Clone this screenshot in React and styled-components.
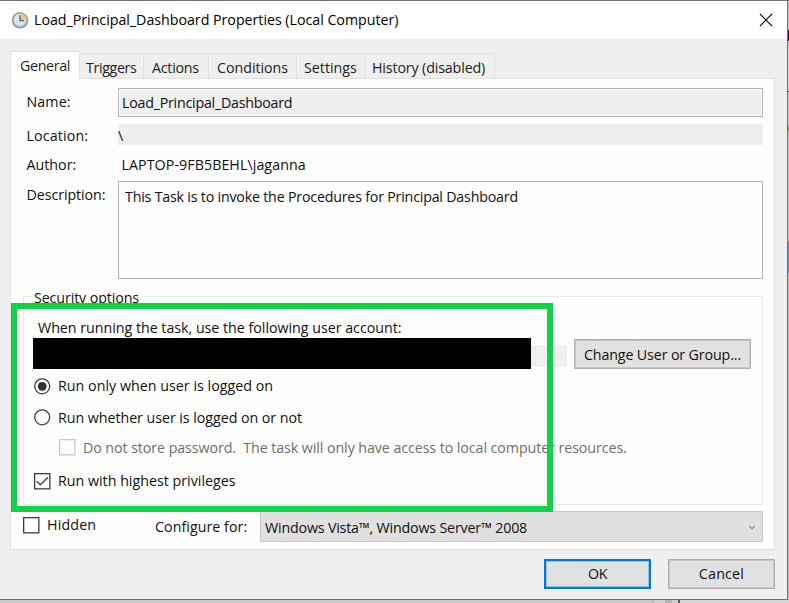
import React from "react";
import styled, { createGlobalStyle } from "styled-components";

const GlobalStyle = createGlobalStyle`
  *, *::before, *::after { box-sizing: border-box; }
  body {
    margin: 0;
    overflow: hidden;
    background: #cfcfcf;
    font-family: "Open Sans", "Noto Sans", sans-serif;
    font-size: 14.25px;
    line-height: 20px;
    color: #111;
  }
`;

const Desktop = styled.div`
  display: grid;
  grid-template: 600px 3px / 788px 1px;
  width: 789px;
  height: 603px;
`;

const SideEdge = styled.div`
  background: linear-gradient(
    #6a6767 1px, #cbcbcb 1px 30px, #3a1530 30px 41px, #d4d4d4 41px 91px,
    #222 91px 92px, #d0d0d0 92px 126px, #8c9474 126px 131px, #c6c6c6 131px 241px,
    #6f8fb8 241px 273px, #bdbdbd 273px
  );
`;

const BottomEdge = styled.div`
  grid-column: 1 / -1;
  background: linear-gradient(
    90deg, #c9c9c9 652px, #b8b8b8 652px 654px, #cfcfcf 654px 665px, #b4b4b4 665px 672px,
    #cfcfcf 672px 678px, #555 678px 680px, #d6d6d6 680px
  );
`;

const Dialog = styled.main`
  display: flex;
  flex-direction: column;
  border: solid #6f6f6f;
  border-width: 1px 1px 1px 0;
  background: #efefef;
`;

const TitleBar = styled.header`
  display: flex;
  align-items: center;
  height: 38px;
  padding: 0 14px 0 11px;
  background: #fff;
  color: #000;
`;

const Text = styled.span`
  white-space: pre;
  letter-spacing: ${(p) => p.$track || 0}px;
`;

const Title = styled(Text)`
  flex: 1;
  margin-left: 5px;
`;

const Tabs = styled.nav`
  display: flex;
  align-items: flex-end;
  height: 39px;
  padding-left: 10px;
`;

const Tab = styled.div`
  width: ${(p) => p.$width}px;
  height: 25px;
  padding: 4px 0 0 ${(p) => p.$inset}px;
  border: solid #e2e2e2;
  border-width: 1px 1px 0 0;
  color: #222;
`;

const ActiveTab = styled(Tab)`
  height: 28px;
  margin-bottom: -1px;
  border-left-width: 1px;
  background: #fff;
  position: relative;
  z-index: 1;
`;

const Panel = styled.section`
  display: flex;
  flex-direction: column;
  width: 765px;
  height: 472px;
  margin-left: 10px;
  padding: 9px 11px 0 12px;
  border: 1px solid #e1e1e1;
  background: #fefefe;
  position: relative;
`;

const Field = styled.div`
  display: grid;
  grid-template-columns: 95px 1fr;
  height: ${(p) => p.$height}px;
`;

const Caption = styled(Text)`
  padding: ${(p) => p.$drop}px 0 0 3.5px;
`;

const NameBox = styled.div`
  height: 29px;
  padding: 4px 0 0 3px;
  border: 1px solid #b5b5b5;
  background: #efefef;
  box-shadow: inset 0 0 0 1px #fbfbfb;
`;

const LocationBox = styled.div`
  height: 21px;
  margin-top: 1px;
  padding-top: 2px;
  background: #efefef;
`;

const AuthorValue = styled.div`
  padding: 3px 0 0 3.5px;
`;

const DescriptionBox = styled.div`
  height: 98px;
  padding: 5px 0 0 6px;
  border: 1px solid #b3b3b3;
`;

const Group = styled.section`
  height: 209px;
  margin-top: 17px;
  border: 1px solid #e8e8e8;
`;

const Legend = styled.div`
  width: 111px;
  height: 20px;
  margin: -9px 0 0 7px;
  padding-left: 3px;
  background: #fefefe;
`;

const AccountPrompt = styled.div`
  height: 20px;
  margin: 10px 0 0 14px;
`;

const AccountRow = styled.div`
  display: flex;
  align-items: center;
  height: 31px;
  margin-left: 9px;
`;

const Redaction = styled.div`
  width: 498px;
  height: 31px;
  background: #000;
`;

const AccountBox = styled.div`
  width: 36px;
  height: 22px;
  margin: 4px 7px 0 0;
  background: #f0f0f0;
`;

const Button = styled.button`
  width: ${(p) => p.$width}px;
  height: 30px;
  padding: ${(p) => p.$drop || 0}px 0 1px;
  border: ${(p) => (p.$primary ? "2px solid #0078d7" : "1px solid #b0b0b0")};
  border-radius: 0;
  background: #e1e1e1;
  box-shadow: ${(p) => (p.$primary ? "inset 0 0 0 1px #9cc0de" : "inset 0 0 0 1px #c8c8c8")};
  font: inherit;
  color: #111;
`;

const Option = styled.label`
  display: flex;
  align-items: center;
  gap: 7px;
  height: ${(p) => p.$height}px;
  margin-left: ${(p) => p.$indent}px;
  color: ${(p) => (p.$muted ? "#6d6d6d" : "inherit")};
`;

const BottomRow = styled.div`
  display: grid;
  grid-template-columns: 132px 105px 1fr;
  height: 31px;
  margin-top: 6px;
`;

const ConfigureLabel = styled(Text)`
  margin-top: 6px;
`;

const Combo = styled.div`
  display: flex;
  align-items: center;
  justify-content: space-between;
  height: 31px;
  padding: 2px 6px 0 4px;
  border: 1px solid #c9c9c9;
  background: #e0e0e0;
`;

const Actions = styled.footer`
  display: flex;
  justify-content: flex-end;
  gap: 17px;
  padding: 9px 12px 0 0;
`;

const Highlight = styled.div`
  position: absolute;
  left: 0;
  top: 224px;
  width: 542px;
  height: 209px;
  border: 6px solid #0fd244;
  pointer-events: none;
`;

const Icon = styled.svg`
  display: block;
  flex: none;
`;

const ClockIcon = () => (
  <Icon width="18" height="18" viewBox="0 0 18 18">
    <circle cx="9" cy="9.4" r="8.2" fill="#9b9a96" />
    <circle cx="9" cy="9" r="7.3" fill="#bfc4c4" stroke="#8e9290" strokeWidth=".8" />
    <circle cx="9" cy="9" r="5.9" fill="#d6e4ec" />
    <path d="M9 9V2.5A6.5 6.5 0 0 1 15.5 9Z" fill="#ecca80" />
    <path d="M9 4.3V9.6H13" fill="none" stroke="#4c6475" strokeWidth="1.3" />
  </Icon>
);

const CloseIcon = () => (
  <Icon width="14" height="14" viewBox="0 0 14 14">
    <path d="M1 1 13 13M13 1 1 13" stroke="#111" strokeWidth="1.1" />
  </Icon>
);

const Radio = ({ on }) => (
  <Icon width="17" height="17" viewBox="0 0 17 17">
    <circle cx="8.2" cy="8.3" r="7.5" fill="#fff" stroke="#3c3c3c" strokeWidth="1.3" />
    {on && <circle cx="8.2" cy="8.3" r="4.4" fill="#333" />}
  </Icon>
);

const Check = ({ on, muted }) => (
  <Icon width="17" height="17" viewBox="0 0 17 17">
    <rect x=".65" y=".65" width="15.2" height="15.2" fill="#fff" stroke={muted ? "#c8c8c8" : "#3c3c3c"} strokeWidth="1.3" />
    {on && <path d="M2.6 8.2 6.3 11.8 14 4.3" fill="none" stroke="#444" strokeWidth="1.4" />}
  </Icon>
);

const Chevron = () => (
  <Icon width="8" height="6" viewBox="0 0 8 6">
    <path d="M1.2 1 4 3.7 6.8 1" fill="none" stroke="#8a8a8a" strokeWidth="1.2" />
  </Icon>
);

const tabs = [
  { label: "Triggers", width: 64, inset: 6, track: -0.36 },
  { label: "Actions", width: 65, inset: 8, track: -0.26 },
  { label: "Conditions", width: 88, inset: 8, track: -0.03 },
  { label: "Settings", width: 68, inset: 7, track: 0 },
  { label: "History (disabled)", width: 130, inset: 7, track: -0.14 },
];

export default function App() {
  return (
    <Desktop>
      <GlobalStyle />
      <Dialog>
        <TitleBar>
          <ClockIcon />
          <Title $track={-0.03}>Load_Principal_Dashboard Properties (Local Computer)</Title>
          <CloseIcon />
        </TitleBar>
        <Tabs>
          <ActiveTab $width={70} $inset={9}><Text $track={-0.33}>General</Text></ActiveTab>
          {tabs.map((t) => (
            <Tab key={t.label} $width={t.width} $inset={t.inset}>
              <Text $track={t.track}>{t.label}</Text>
            </Tab>
          ))}
        </Tabs>
        <Panel>
          <Field $height={35}>
            <Caption $drop={4} $track={0.1}>Name:</Caption>
            <NameBox><Text $track={-0.24}>Load_Principal_Dashboard</Text></NameBox>
          </Field>
          <Field $height={29}>
            <Caption $drop={3} $track={0.13}>Location:</Caption>
            <LocationBox><Text>\</Text></LocationBox>
          </Field>
          <Field $height={29}>
            <Caption $drop={3}>Author:</Caption>
            <AuthorValue><Text $track={0.06}>{"LAPTOP-9FB5BEHL\\jaganna"}</Text></AuthorValue>
          </Field>
          <Field $height={98}>
            <Caption $drop={4} $track={-0.08}>Description:</Caption>
            <DescriptionBox>
              <Text $track={-0.21}>This Task is to invoke the Procedures for Principal Dashboard</Text>
            </DescriptionBox>
          </Field>
          <Group>
            <Legend><Text $track={-0.11}>Security options</Text></Legend>
            <AccountPrompt><Text $track={-0.02}>When running the task, use the following user account:</Text></AccountPrompt>
            <AccountRow>
              <Redaction />
              <AccountBox />
              <Button $width={177} $drop={3}><Text $track={-0.13}>Change User or Group...</Text></Button>
            </AccountRow>
            <Option $height={34} $indent={10}>
              <Radio on />
              <Text $track={0.02}>Run only when user is logged on</Text>
            </Option>
            <Option $height={29} $indent={10}>
              <Radio />
              <Text $track={-0.05}>Run whether user is logged on or not</Text>
            </Option>
            <Option $height={31} $indent={35} $muted>
              <Check muted />
              <Text $track={-0.08}>{"Do not store password.  The task will only have access to local computer resources."}</Text>
            </Option>
            <Option $height={36} $indent={10}>
              <Check on />
              <Text>Run with highest privileges</Text>
            </Option>
          </Group>
          <BottomRow>
            <Option $height={28} $indent={0}>
              <Check />
              <Text $track={0.15}>Hidden</Text>
            </Option>
            <ConfigureLabel $track={0.04}>Configure for:</ConfigureLabel>
            <Combo>
              <Text $track={-0.18}>Windows Vista™, Windows Server™ 2008</Text>
              <Chevron />
            </Combo>
          </BottomRow>
          <Highlight />
        </Panel>
        <Actions>
          <Button $width={107} $primary><Text $track={-0.5}>OK</Text></Button>
          <Button $width={107}><Text $track={0.2}>Cancel</Text></Button>
        </Actions>
      </Dialog>
      <SideEdge />
      <BottomEdge />
    </Desktop>
  );
}
